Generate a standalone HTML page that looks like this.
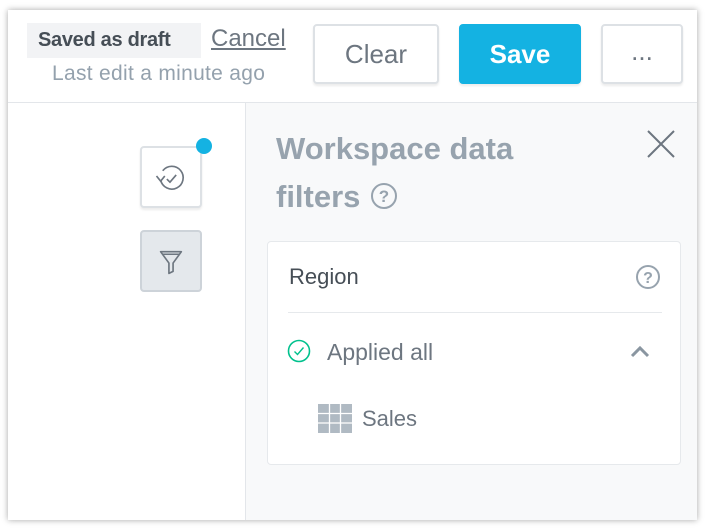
<!DOCTYPE html>
<html><head><style>
body{margin:0;width:706px;height:530px;background:#fff;font-family:"Liberation Sans",sans-serif;position:relative;overflow:hidden}
.win{position:absolute;left:8px;top:10px;width:689px;height:510px;background:#fff;box-shadow:0 0 6px rgba(0,0,0,.35)}
.hdr{position:absolute;left:0;top:0;width:689px;height:92px;border-bottom:1px solid #e3e6ea}
.draft{position:absolute;left:19px;top:13px;width:174px;height:35px;background:#f2f3f5}
.draft span{position:absolute;left:11px;top:6px;font-size:20px;font-weight:bold;color:#464e56;letter-spacing:-0.3px}
.cancel{position:absolute;left:203px;top:15px;font-size:24px;color:#6d7680;text-decoration:underline}
.last{position:absolute;left:44px;top:52px;font-size:21px;color:#94a1ad;letter-spacing:0.3px}
.btn{position:absolute;top:14px;height:60px;border:2px solid #dde1e5;border-radius:4px;background:#fff;box-sizing:border-box;box-shadow:0 2px 2px rgba(0,0,0,.08);color:#6d7680;font-size:26px;text-align:center;line-height:56px}
.left{position:absolute;left:0;top:93px;width:237px;height:417px;border-right:1px solid #e3e6ea}
.right{position:absolute;left:238px;top:93px;width:451px;height:417px;background:#f8f9fa}
.ib{position:absolute;left:132px;width:62px;height:62px;box-sizing:border-box;border-radius:4px}
.title{position:absolute;left:30px;top:22px;font-size:31px;font-weight:bold;color:#97a3ae;line-height:48px}
.card{position:absolute;left:21px;top:138px;width:412px;height:222px;background:#fff;border:1px solid #e6e9ec;border-radius:4px}
</style></head><body>
<div class="win">
 <div class="hdr">
  <div class="draft"><span>Saved as draft</span></div>
  <div class="cancel">Cancel</div>
  <div class="last">Last edit a minute ago</div>
  <div class="btn" style="left:305px;width:126px">Clear</div>
  <div class="btn" style="left:451px;width:122px;background:#14b2e2;border-color:#14b2e2;color:#fff;font-weight:bold">Save</div>
  <div class="btn" style="left:593px;width:82px;line-height:50px">...</div>
 </div>
 <div class="left">
  <div class="ib" style="top:43px;border:2px solid #dde1e5;background:#fff;box-shadow:0 2px 2px rgba(0,0,0,.08)">
   <svg width="58" height="58" viewBox="0 0 56 56" style="position:absolute;left:0;top:0"><path d="M18 31 A11 11 0 1 0 20 22" fill="none" stroke="#6d7680" stroke-width="1.6"/><path d="M14 27 L18 32 L22 27" fill="none" stroke="#6d7680" stroke-width="1.6"/><path d="M24 30 L27 33 L33 26" fill="none" stroke="#6d7680" stroke-width="1.6"/></svg>
   <div style="position:absolute;right:-12px;top:-10px;width:16px;height:16px;border-radius:50%;background:#14b2e2"></div>
  </div>
  <div class="ib" style="top:127px;border:2px solid #cdd3d9;background:#e4e8ec">
   <svg width="58" height="58" viewBox="0 0 56 56" style="position:absolute;left:0;top:0"><path d="M18 19 H38 L30 30 V38 L26 40 V30 Z" fill="none" stroke="#6d7680" stroke-width="1.6" stroke-linejoin="round"/><path d="M20 21.5 H36" stroke="#6d7680" stroke-width="1.4"/></svg>
  </div>
 </div>
 <div class="right">
  <div class="title">Workspace data<br>filters <svg width="30" height="30" viewBox="0 0 30 30" style="vertical-align:-4px"><circle cx="15" cy="15" r="12" fill="none" stroke="#97a3ae" stroke-width="2"/><text x="15" y="21" font-size="17" font-weight="bold" text-anchor="middle" fill="#97a3ae" font-family="Liberation Sans">?</text></svg></div>
  <svg width="34" height="34" style="position:absolute;left:398px;top:24px"><path d="M4 4 L30 30 M30 4 L4 30" stroke="#6d7680" stroke-width="2"/></svg>
  <div class="card">
   <div style="position:absolute;left:21px;top:22px;font-size:22px;color:#464e56">Region</div>
   <svg width="26" height="26" style="position:absolute;left:367px;top:22px"><circle cx="13" cy="13" r="11" fill="none" stroke="#97a3ae" stroke-width="2"/><text x="13" y="19" font-size="16" font-weight="bold" text-anchor="middle" fill="#97a3ae" font-family="Liberation Sans">?</text></svg>
   <div style="position:absolute;left:20px;top:70px;width:374px;height:1px;background:#e6e9ec"></div>
   <svg width="26" height="26" style="position:absolute;left:19px;top:97px"><circle cx="12" cy="12" r="10.5" fill="none" stroke="#00c18d" stroke-width="1.6"/><path d="M7.5 12.5 L10.5 15.5 L16.5 8.5" fill="none" stroke="#00c18d" stroke-width="1.4"/></svg>
   <div style="position:absolute;left:59px;top:97px;font-size:23px;color:#6d7680">Applied all</div>
   <svg width="24" height="20" style="position:absolute;left:361px;top:101px"><path d="M3 13 L11 5 L19 13" fill="none" stroke="#8a96a1" stroke-width="3"/></svg>
   <svg width="34" height="30" style="position:absolute;left:50px;top:162px"><rect x="0" y="0" width="34" height="29" fill="#b0bac3"/><g stroke="#fff" stroke-width="1.3"><path d="M0 9.5 H34 M0 19 H34 M11.5 0 V29 M22.5 0 V29"/></g></svg>
   <div style="position:absolute;left:94px;top:164px;font-size:22px;color:#6d7680">Sales</div>
  </div>
 </div>
</div>
</body></html>
